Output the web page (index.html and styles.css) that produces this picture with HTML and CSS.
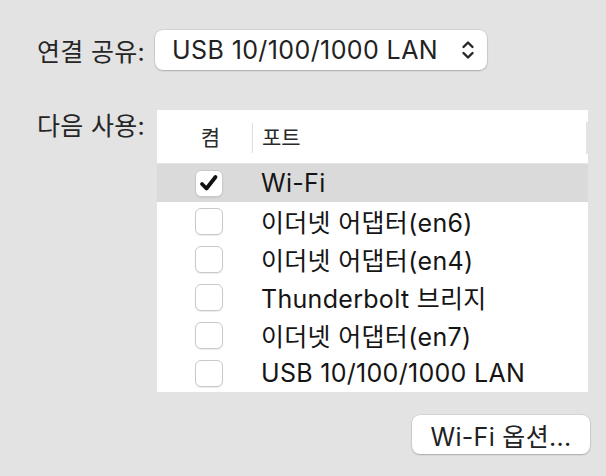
FILE: index.html
```html
<!DOCTYPE html>
<html lang="ko">
<head>
<meta charset="utf-8">
<link rel="stylesheet" href="styles.css">
</head>
<body>
<div class="form">
  <div class="label label-top">연결 공유:</div>
  <div class="popup">
    <span class="popup-text">USB 10/100/1000 LAN</span>
    <svg class="chev" width="14" height="20" viewBox="0 0 14 20"><path d="M2.5 7 L7 2.5 L11.5 7 M2.5 13 L7 17.5 L11.5 13" fill="none" stroke="#262626" stroke-width="2.4" stroke-linecap="round" stroke-linejoin="round"/></svg>
  </div>

  <div class="label label-use">다음 사용:</div>
  <div class="table">
    <div class="thead">
      <div class="th th-on">켬</div>
      <div class="th th-port">포트</div>
      <div class="th-end"></div>
    </div>
    <div class="row selected">
      <div class="cell-check"><span class="cb checked"><svg width="20" height="18" viewBox="0 0 20 18"><path d="M3 10 L7.5 14.5 L16.5 3" fill="none" stroke="#111" stroke-width="3.8" stroke-linecap="round" stroke-linejoin="round"/></svg></span></div>
      <div class="cell-name">Wi-Fi</div>
    </div>
    <div class="row">
      <div class="cell-check"><span class="cb"></span></div>
      <div class="cell-name">이더넷 어댑터(en6)</div>
    </div>
    <div class="row">
      <div class="cell-check"><span class="cb"></span></div>
      <div class="cell-name">이더넷 어댑터(en4)</div>
    </div>
    <div class="row">
      <div class="cell-check"><span class="cb"></span></div>
      <div class="cell-name">Thunderbolt 브리지</div>
    </div>
    <div class="row">
      <div class="cell-check"><span class="cb"></span></div>
      <div class="cell-name">이더넷 어댑터(en7)</div>
    </div>
    <div class="row">
      <div class="cell-check"><span class="cb"></span></div>
      <div class="cell-name">USB 10/100/1000 LAN</div>
    </div>
  </div>

  <div></div>
  <div class="actions">
    <button class="btn">Wi-Fi 옵션...</button>
  </div>
</div>
</body>
</html>
```

FILE: styles.css
```css
html, body {
  margin: 0;
  padding: 0;
}
body {
  width: 606px;
  height: 476px;
  background: #e3e3e3;
  font-family: Inter, "Noto Sans CJK KR", sans-serif;
  color: #1e1e1e;
  overflow: hidden;
}
.form {
  display: grid;
  grid-template-columns: 145px 433px;
  column-gap: 10px;
  padding-top: 30px;
}
.label {
  text-align: right;
  font-size: 25px;
  letter-spacing: 0.3px;
  color: #262626;
  white-space: nowrap;
}
.label-top {
  align-self: center;
}
.label-use {
  margin-top: 40px;
  padding-top: 2px;
  line-height: 28px;
}
.popup {
  width: 332px;
  height: 40px;
  box-sizing: border-box;
  background: #fff;
  border-radius: 8px;
  box-shadow: 0 0 0 0.5px rgba(0,0,0,0.12), 0 1px 2px rgba(0,0,0,0.2);
  display: flex;
  align-items: center;
  justify-content: space-between;
  padding: 0 12px 0 17px;
}
.popup-text {
  font-size: 25px;
  letter-spacing: 0.4px;
  color: #222;
}
.chev {
  display: block;
}
.table {
  margin-top: 40px;
  margin-left: 2px;
  width: 431px;
  background: #fff;
}
.thead {
  height: 54px;
  box-sizing: border-box;
  border-bottom: 1px solid #e6e6e6;
  display: flex;
  align-items: center;
  font-size: 21px;
  color: #2a2a2a;
}
.th {
  height: 30px;
  line-height: 30px;
  margin-top: 2px;
}
.th-on {
  width: 96px;
  text-align: center;
  border-right: 1px solid #dedede;
  box-sizing: border-box;
  padding-left: 12px;
}
.th-port {
  flex: 1;
  padding-left: 9px;
}
.th-end {
  width: 2px;
  height: 32px;
  margin-top: 2px;
  background: #e4e4e4;
}
.row {
  height: 38px;
  display: flex;
  align-items: center;
  font-size: 25px;
  letter-spacing: 0.3px;
  color: #151515;
}
.row.selected {
  background: #dadada;
}
.cell-check {
  width: 104px;
  display: flex;
  justify-content: center;
  box-sizing: border-box;
}
.cb {
  width: 28px;
  height: 27px;
  box-sizing: border-box;
  border-radius: 6px;
  background: #fff;
  border: 1px solid #c9c9c9;
  box-shadow: 0 1px 1px rgba(0,0,0,0.08);
  display: flex;
  align-items: center;
  justify-content: center;
}
.cb.checked svg {
  display: block;
}
.cell-name {
  white-space: nowrap;
}
.actions {
  display: flex;
  justify-content: flex-end;
  margin-top: 23px;
}
.btn {
  width: 178px;
  height: 39px;
  margin-right: -2px;
  background: #fff;
  border: none;
  border-radius: 8px;
  box-shadow: 0 0 0 0.5px rgba(0,0,0,0.12), 0 1px 2px rgba(0,0,0,0.2);
  font-family: Inter, "Noto Sans CJK KR", sans-serif;
  font-size: 25px;
  letter-spacing: 0.3px;
  color: #222;
  padding: 0;
}
```
